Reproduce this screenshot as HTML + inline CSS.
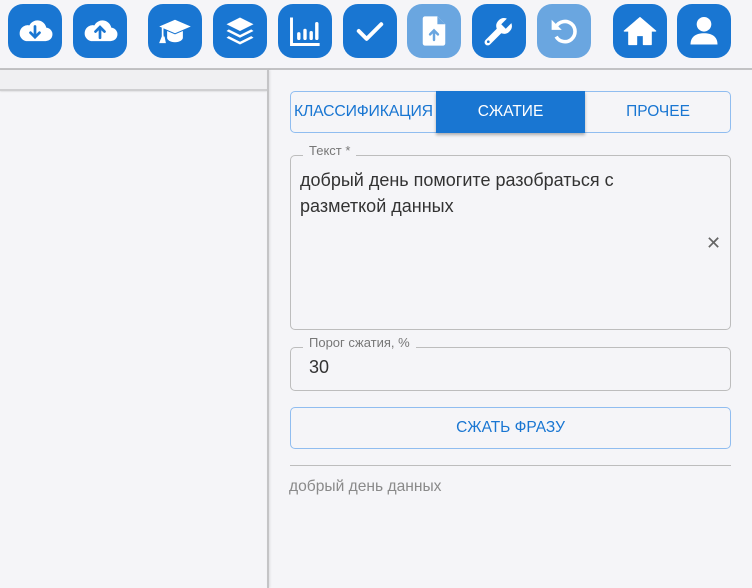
<!DOCTYPE html>
<html><head><meta charset="utf-8"><style>
*{box-sizing:border-box;margin:0;padding:0}
body{width:752px;height:588px;overflow:hidden;background:#f5f5f8;font-family:"Liberation Sans",Arial,sans-serif;position:relative}
.b{position:absolute;top:4px;width:54px;height:54px;border-radius:15px;background:#1976d2}
.b.l{background:#6aa6e0}
.b svg{position:absolute;left:9px;top:9px;width:36px;height:36px}
.abs{position:absolute}
</style></head><body>
<div class="b" style="left:8px"><svg viewBox="0 0 32 32"><path d="M8 25h17a6 6 0 0 0 1-12 8 8 0 0 0-15-2 6.5 6.5 0 0 0-3 14z" fill="#fff"/><path d="M16 12v9M12 17.5l4 4 4-4" stroke="#1976d2" stroke-width="2.4" fill="none" stroke-linecap="round"/></svg></div>
<div class="b" style="left:73px"><svg viewBox="0 0 32 32"><path d="M8 25h17a6 6 0 0 0 1-12 8 8 0 0 0-15-2 6.5 6.5 0 0 0-3 14z" fill="#fff"/><path d="M16 22v-9M12 16.5l4-4 4 4" stroke="#1976d2" stroke-width="2.4" fill="none" stroke-linecap="round"/></svg></div>
<div class="b" style="left:148px"><svg viewBox="0 0 32 32"><path d="M2 12l14-6 14 6-14 6z" fill="#fff"/><path d="M9 16v6c0 2 3 4 7 4s7-2 7-4v-6l-7 3z" fill="#fff"/><path d="M5 13v8l-2 5h4l-1-5" fill="#fff" stroke="#fff" stroke-width="1.5"/></svg></div>
<div class="b" style="left:213px"><svg viewBox="0 0 32 32"><path d="M16 4l12 6-12 6-12-6z" fill="#fff"/><path d="M6 14.5l10 5 10-5 2 1.5-12 6-12-6z" fill="#fff"/><path d="M6 20.5l10 5 10-5 2 1.5-12 6-12-6z" fill="#fff"/></svg></div>
<div class="b" style="left:278px"><svg viewBox="0 0 32 32"><path d="M4 4v24h25" stroke="#fff" stroke-width="2.6" fill="none"/><rect x="9" y="17" width="3" height="7" rx="1.5" fill="#fff"/><rect x="14.5" y="14" width="3" height="10" rx="1.5" fill="#fff"/><rect x="20" y="16" width="3" height="8" rx="1.5" fill="#fff"/><rect x="25" y="8" width="3" height="16" rx="1.5" fill="#fff"/></svg></div>
<div class="b" style="left:343px"><svg viewBox="0 0 32 32"><path d="M6 16l7 7 13-13" stroke="#fff" stroke-width="3.5" fill="none" stroke-linecap="round" stroke-linejoin="round"/></svg></div>
<div class="b l" style="left:407px"><svg viewBox="0 0 32 32"><path d="M8 3h11l7 7v17a2 2 0 0 1-2 2H8a2 2 0 0 1-2-2V5a2 2 0 0 1 2-2z" fill="#fff"/><path d="M19 3v7h7" fill="#6aa6e0"/><path d="M16 24v-8M12.5 19l3.5-3.5 3.5 3.5" stroke="#6aa6e0" stroke-width="2.2" fill="none" stroke-linecap="round"/></svg></div>
<div class="b" style="left:472px"><svg viewBox="0 0 32 32"><path d="M27 9l-5 5-4-4 5-5a7 7 0 0 0-9 9L4 24a2.5 2.5 0 0 0 4 4l10-10a7 7 0 0 0 9-9z" fill="#fff"/><circle cx="6.5" cy="25.5" r="1.2" fill="#1976d2"/></svg></div>
<div class="b l" style="left:537px"><svg viewBox="0 0 32 32"><path d="M9 12a9 9 0 1 1 0 9" stroke="#fff" stroke-width="3.2" fill="none"/><path d="M5 6v9h9z" fill="#fff"/></svg></div>
<div class="b" style="left:613px"><svg viewBox="0 0 32 32"><path d="M16 4L2 16h4v12h7v-8h6v8h7V16h4z" fill="#fff" stroke="#fff" stroke-linejoin="round"/></svg></div>
<div class="b" style="left:677px"><svg viewBox="0 0 32 32"><circle cx="16" cy="10" r="6.5" fill="#fff"/><path d="M4 28c0-7 5-10 12-10s12 3 12 10z" fill="#fff"/></svg></div>

<div class="abs" style="left:0;top:68px;width:752px;height:2px;background:#c2c2c4"></div>
<div class="abs" style="left:0;top:70px;width:267px;height:20px;background:#f0f0f2;box-shadow:0 1px 2px rgba(0,0,0,.2)"></div>
<div class="abs" style="left:0;top:89px;width:267px;height:2px;background:#cfcfd1"></div>
<div class="abs" style="left:267px;top:70px;width:2px;height:518px;background:#c4c4c6;box-shadow:1px 0 2px rgba(0,0,0,.1)"></div>

<div class="abs" style="left:290px;top:91px;width:441px;height:42px;border:1px solid #90bdf0;border-radius:5px"></div>
<div class="abs" style="left:294px;top:103px;font-size:15.8px;color:#1976d2;letter-spacing:-.2px">КЛАССИФИКАЦИЯ</div>
<div class="abs" style="left:436px;top:91px;width:149px;height:42px;background:#1976d2;box-shadow:0 2px 3px rgba(0,0,0,.3);color:#fff;font-size:15.5px;text-align:center;line-height:42px">СЖАТИЕ</div>
<div class="abs" style="left:585px;top:103px;width:146px;text-align:center;font-size:15.5px;color:#1976d2">ПРОЧЕЕ</div>

<div class="abs" style="left:290px;top:155px;width:441px;height:175px;border:1px solid #bdbdbd;border-radius:5px"></div>
<div class="abs" style="left:303px;top:143px;padding:0 6px;background:#f5f5f8;font-size:13px;color:#777">Текст *</div>
<div class="abs" style="left:300px;top:167px;font-size:18px;color:#333;line-height:26px">добрый день помогите разобраться с<br>разметкой данных</div>
<div class="abs" style="left:706px;top:233px;font-size:18px;color:#666">✕</div>

<div class="abs" style="left:290px;top:347px;width:441px;height:44px;border:1px solid #bdbdbd;border-radius:5px"></div>
<div class="abs" style="left:303px;top:335px;padding:0 6px;background:#f5f5f8;font-size:13px;color:#777">Порог сжатия, %</div>
<div class="abs" style="left:309px;top:357px;font-size:18px;color:#333">30</div>

<div class="abs" style="left:290px;top:407px;width:441px;height:42px;border:1px solid #90bdf0;border-radius:5px;text-align:center;line-height:40px;font-size:15.5px;color:#1976d2">СЖАТЬ ФРАЗУ</div>
<div class="abs" style="left:290px;top:465px;width:441px;height:1px;background:#bdbdbd"></div>
<div class="abs" style="left:289px;top:478px;font-size:15.6px;color:#8a8a8a">добрый день данных</div>
</body></html>
